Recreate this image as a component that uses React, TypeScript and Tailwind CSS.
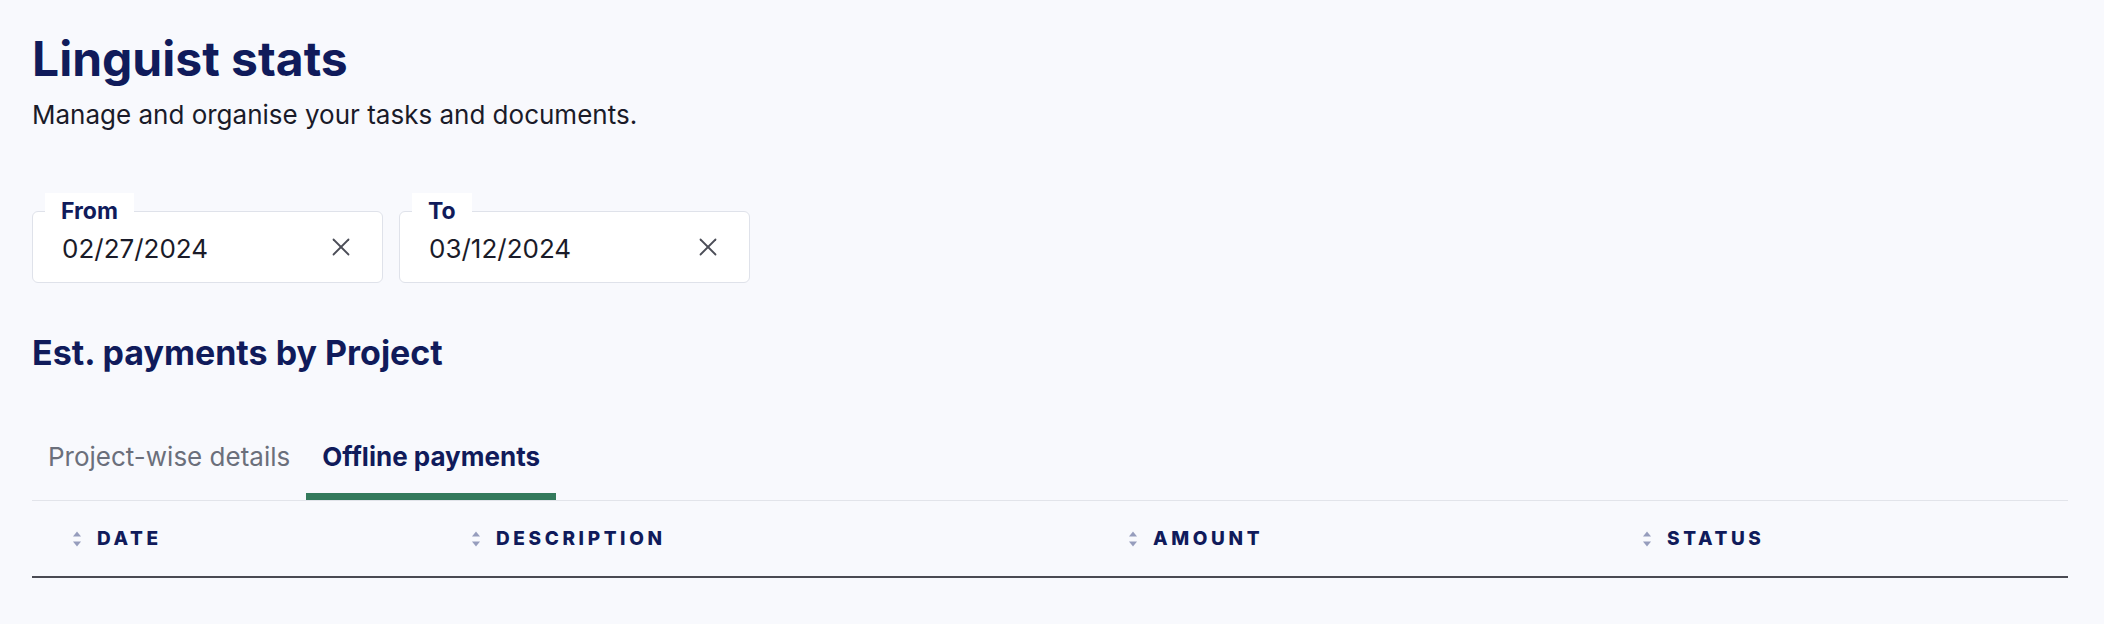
import { useState } from 'react';

const columns = [
  { label: 'DATE', width: 'w-[399px]' },
  { label: 'DESCRIPTION', width: 'w-[657px]' },
  { label: 'AMOUNT', width: 'w-[514px]' },
  { label: 'STATUS', width: 'flex-1' },
];

function ClearIcon() {
  return (
    <svg width="18" height="18" viewBox="0 0 18 18" fill="none" stroke="#4b4d57" strokeWidth="1.8" strokeLinecap="round">
      <path d="M1.5 1.5 16.5 16.5" />
      <path d="M16.5 1.5 1.5 16.5" />
    </svg>
  );
}

function SortIcon() {
  return (
    <svg width="8" height="16" viewBox="0 0 8 16" fill="#969dbd">
      <polygon points="4,0.5 8,5.5 0,5.5" />
      <polygon points="0,10.5 8,10.5 4,15.5" />
    </svg>
  );
}

// Outlined date field with the label sitting on the top border
function DateField({ label, value }: { label: string; value: string }) {
  return (
    <div className="relative w-[351px] h-[72px] bg-white border border-[#dfe2ea] rounded-md flex items-center justify-between pl-[29px] pr-[32px]">
      <span className="absolute left-[12px] -top-[19px] h-[36px] px-4 bg-white text-[23px] leading-[36px] font-bold text-[#101b5b]">
        {label}
      </span>
      <span className="text-[26px] text-[#1a1b29] pt-0.5">{value}</span>
      <button className="flex items-center justify-center">
        <ClearIcon />
      </button>
    </div>
  );
}

export default function App() {
  const [tab, setTab] = useState('offline');

  return (
    <div className="min-h-screen bg-[#f8f9fd] font-['Inter',sans-serif] pl-8 pr-9 pt-[35px]">
      <h1 className="text-5xl leading-[48px] font-bold text-[#101b5b]">Linguist stats</h1>
      <p className="mt-4 text-[26px] leading-8 text-[#1a1b29]">Manage and organise your tasks and documents.</p>

      <div className="mt-20 flex gap-4">
        <DateField label="From" value="02/27/2024" />
        <DateField label="To" value="03/12/2024" />
      </div>

      <h2 className="mt-[50px] text-[34px] leading-10 font-bold text-[#101b5b]">Est. payments by Project</h2>

      <div className="mt-[52px] flex border-b border-[#e2e4ea]">
        <button
          onClick={() => setTab('project')}
          className={`px-4 pt-4 pb-5 text-[26px] leading-8 border-b-[7px] ${
            tab === 'project' ? 'border-[#347a5c] text-[#101b5b] font-bold' : 'border-transparent text-[#6b6f7b]'
          }`}
        >
          Project-wise details
        </button>
        <button
          onClick={() => setTab('offline')}
          className={`px-4 pt-4 pb-5 text-[26px] leading-8 border-b-[7px] ${
            tab === 'offline' ? 'border-[#347a5c] text-[#101b5b] font-bold' : 'border-transparent text-[#6b6f7b]'
          }`}
        >
          Offline payments
        </button>
      </div>

      <div className="flex h-[77px] border-b-2 border-[#4a4b53]">
        {columns.map((col) => (
          <div key={col.label} className={`${col.width} flex items-center gap-4 pl-[41px]`}>
            <SortIcon />
            <span className="text-[19px] font-extrabold tracking-[0.19em] text-[#101b5b] pt-[2px]">{col.label}</span>
          </div>
        ))}
      </div>
    </div>
  );
}
